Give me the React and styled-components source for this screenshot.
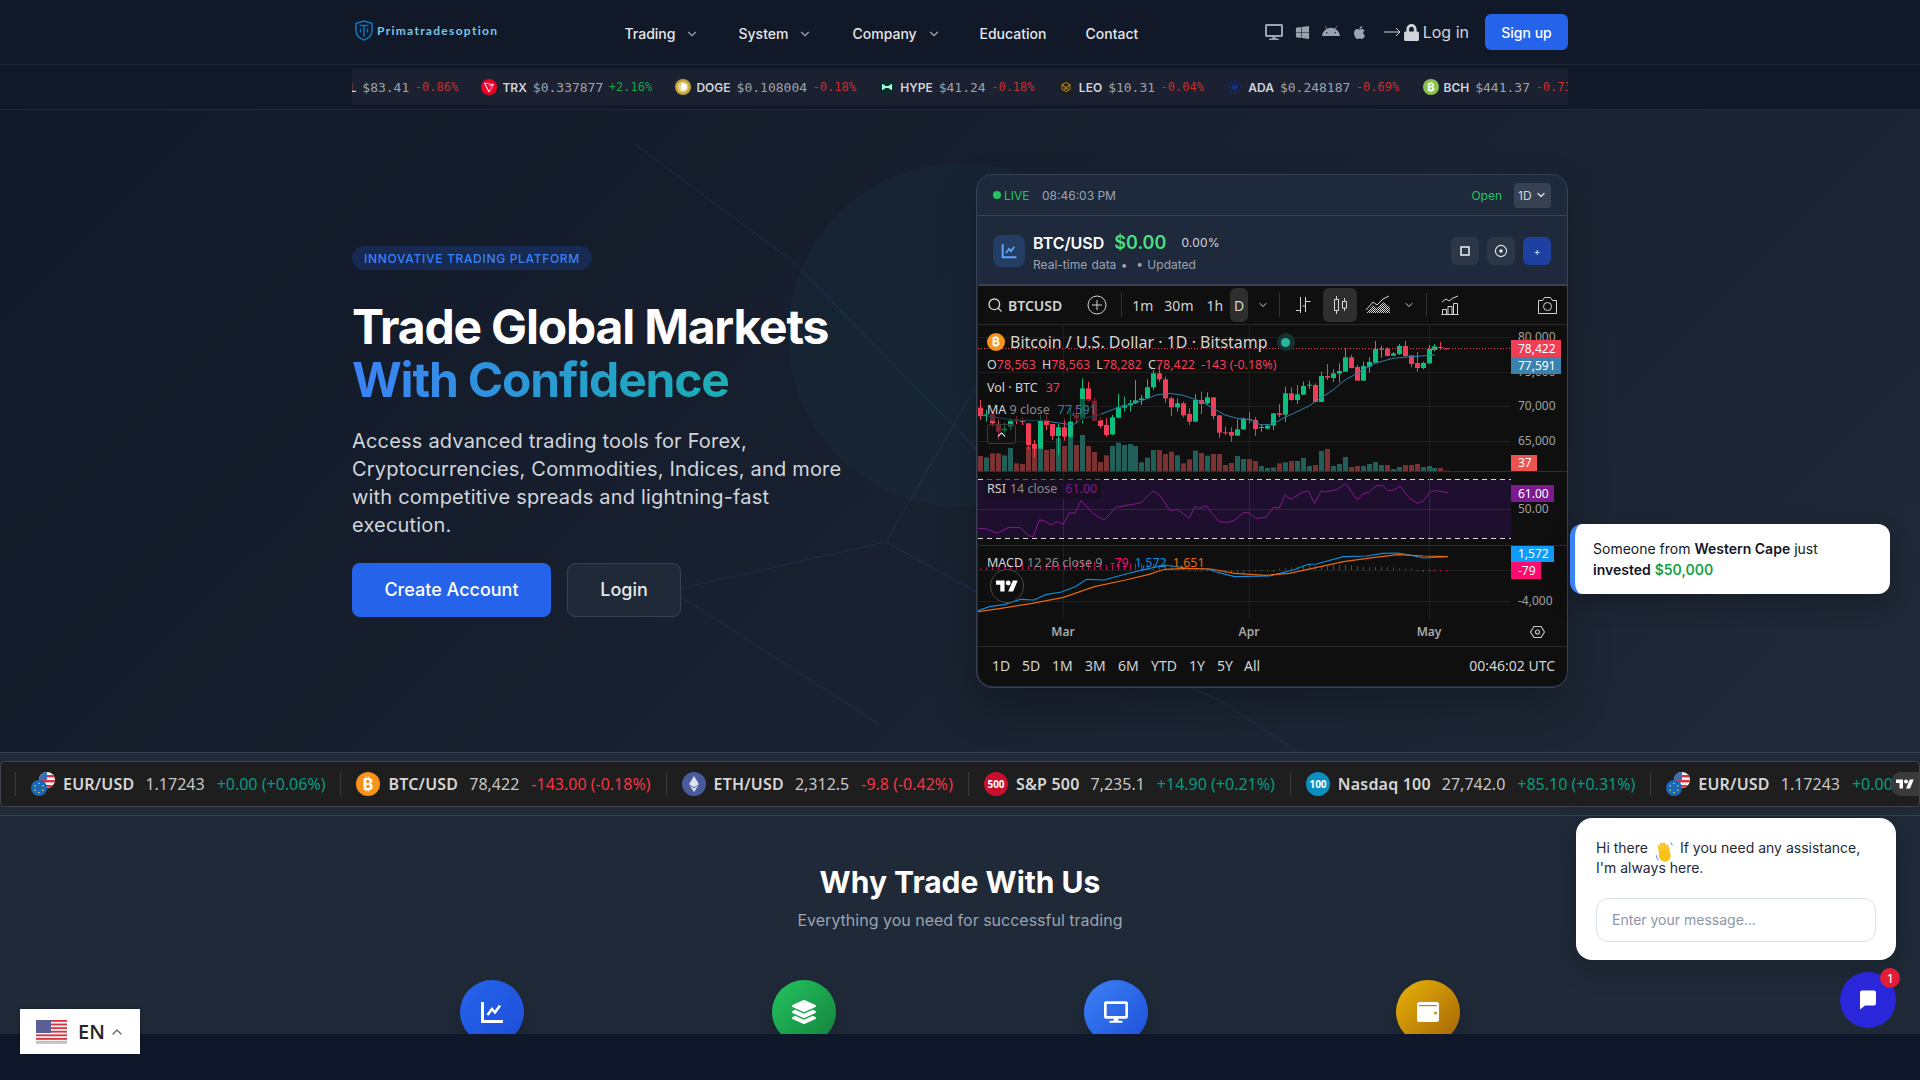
import styled, { createGlobalStyle } from "styled-components";
import {
  FaAndroid,
  FaApple,
  FaDesktop,
  FaLayerGroup,
  FaLock,
  FaWindows,
} from "react-icons/fa";
import { ChevronDown, ChevronUp, Search } from "lucide-react";

const GlobalStyle = createGlobalStyle`
  html, body {
    margin: 0;
    height: 100%;
    background: #111827;
    font-family: Inter, "Liberation Sans", sans-serif;
  }
  * { box-sizing: border-box; }
`;

const Page = styled.div`
  position: relative;
  height: 100vh;
  display: flex;
  flex-direction: column;
  overflow: hidden;
`;

/* nav */
const Nav = styled.header`
  height: 65px;
  flex: none;
  background: #111827;
  border-bottom: 1px solid #1f2937;
  padding: 0 352px;
  display: flex;
  align-items: center;
`;
const Logo = styled.div`
  display: flex;
  align-items: center;
  gap: 4px;
  width: 269.5px;
  margin-top: -4px;
  margin-left: 3px;
  color: #7cc4e8;
  font: 700 12px Lato, Inter, sans-serif;
  letter-spacing: 1.3px;
`;
const NavLinks = styled.nav`
  display: flex;
  align-items: center;
  margin-top: 3px;
`;
const NavLink = styled.a`
  display: flex;
  align-items: center;
  gap: 10px;
  width: ${(p) => p.$w}px;
  color: #e5e7eb;
  font-size: 14px;
  font-weight: 500;
`;
const NavRight = styled.div`
  margin-left: auto;
  display: flex;
  align-items: center;
  color: #9ca3af;
`;
const Platforms = styled.div`
  display: flex;
  align-items: center;
  gap: 12px;
  margin-right: 17px;
  font-size: 16px;
`;
const LogIn = styled.a`
  display: flex;
  align-items: center;
  gap: 2.5px;
  color: #d1d5db;
  font-size: 16px;
  margin-right: 16px;
`;
const SignUp = styled.button`
  width: 83px;
  height: 36px;
  border: 0;
  padding-bottom: 1px;
  border-radius: 6px;
  background: #2563eb;
  color: #fff;
  font: 500 14px Inter, sans-serif;
`;

/* coin strip */
const CoinStrip = styled.div`
  height: 45px;
  flex: none;
  padding: 4px 352px 0;
  background: #111827;
  border-bottom: 1px solid #1f2937;
`;
const CoinViewport = styled.div`
  height: 36px;
  background: #1b2130;
  overflow: hidden;
`;
const CoinTrack = styled.div`
  height: 100%;
  display: flex;
  align-items: center;
  gap: 23.3px;
  margin-left: -40.5px;
  white-space: nowrap;
`;
const Coin = styled.div`
  display: flex;
  align-items: center;
  flex: none;
`;
const CoinSym = styled.span`
  margin-left: 5px;
  color: #d1d5db;
  font-size: 12px;
  font-weight: 600;
`;
const CoinPrice = styled.span`
  margin-left: 6px;
  color: #9ca3af;
  font: 13px "DejaVu Sans Mono", monospace;
`;
const CoinChange = styled.span`
  margin-left: 5.5px;
  color: ${(p) => (p.$up ? "#16a34a" : "#c53030")};
  font: 12px "DejaVu Sans Mono", monospace;
`;

/* hero */
const Hero = styled.section`
  position: relative;
  flex: none;
  height: 642px;
  padding: 64px 352px;
  background: linear-gradient(135deg, #111827 0%, #1f2937 100%);
  overflow: hidden;
`;
const HeroDecor = styled.svg`
  position: absolute;
  top: -110px;
  left: 0;
  width: 1920px;
  height: 1080px;
`;
const HeroGrid = styled.div`
  position: relative;
  display: grid;
  grid-template-columns: 1fr 592px;
  gap: 32px;
  align-items: center;
`;
const HeroCopy = styled.div`
  display: flex;
  flex-direction: column;
  align-items: flex-start;
  padding-top: 1px;
`;
const Badge = styled.span`
  height: 24px;
  width: 240px;
  display: flex;
  align-items: center;
  justify-content: center;
  border-radius: 12px;
  background: rgba(37, 99, 235, 0.2);
  color: #3b82f6;
  font-size: 12px;
  font-weight: 500;
  letter-spacing: 0.68px;
`;
const Title = styled.h1`
  margin: 31px 0 20px;
  color: #fff;
  font-size: 48px;
  line-height: 52.8px;
  font-weight: 700;
  letter-spacing: -1.2px;
`;
const Gradient = styled.span`
  display: inline-block;
  background: linear-gradient(90deg, #3b82f6, #14b8a6);
  background-size: 118% 100%;
  -webkit-background-clip: text;
  background-clip: text;
  color: transparent;
`;
const Lead = styled.p`
  margin: 0 0 24px;
  max-width: 512px;
  color: #d1d5db;
  font-size: 20px;
  line-height: 28px;
  letter-spacing: 0.19px;
`;
const Actions = styled.div`
  display: flex;
  gap: 16px;
`;
const HeroButton = styled.a`
  height: 54px;
  width: ${(p) => p.$w}px;
  display: flex;
  align-items: center;
  justify-content: center;
  border-radius: 8px;
  font-size: 18px;
  font-weight: 500;
  color: ${(p) => (p.$primary ? "#fff" : "#e5e7eb")};
  background: ${(p) => (p.$primary ? "#2563eb" : "#1f2937")};
  border: ${(p) => (p.$primary ? "0" : "1px solid #374151")};
`;

/* chart card */
const Card = styled.div`
  height: 514px;
  display: flex;
  flex-direction: column;
  background: #1e293b;
  border: 1px solid #374151;
  border-radius: 16px;
  box-shadow: 0 20px 40px rgba(0, 0, 0, 0.25);
  overflow: hidden;
`;
const CardBar = styled.div`
  height: 41px;
  flex: none;
  display: flex;
  align-items: center;
  padding: 0 16px;
  border-bottom: 1px solid #374151;
  font-size: 12px;
`;
const LiveDot = styled.i`
  width: 8px;
  height: 8px;
  border-radius: 50%;
  background: #22c55e;
  margin-right: 3px;
`;
const Live = styled.span`
  color: #22c55e;
  width: 28px;
`;
const Clock = styled.span`
  margin-left: 10px;
  color: #9ca3af;
`;
const OpenTag = styled.span`
  margin-left: auto;
  color: #22c55e;
  margin-right: 12px;
`;
const RangeSelect = styled.div`
  width: 37px;
  height: 25px;
  display: flex;
  align-items: center;
  padding-left: 4px;
  gap: 3px;
  border-radius: 4px;
  background: #374151;
  color: #d1d5db;
`;
const SymbolRow = styled.div`
  height: 68px;
  flex: none;
  display: flex;
  align-items: center;
  gap: 8px;
  padding: 2px 16px 0;
`;
const SymbolIcon = styled.div`
  width: 32px;
  height: 32px;
  display: flex;
  align-items: center;
  justify-content: center;
  border-radius: 8px;
  background: rgba(59, 130, 246, 0.22);
`;
const SymbolText = styled.div`
  display: flex;
  flex-direction: column;
  gap: 4px;
  margin-top: 2px;
`;
const SymbolTop = styled.div`
  display: flex;
  align-items: center;
  color: #fff;
  font-size: 16px;
  font-weight: 600;
`;
const SymbolPrice = styled.span`
  margin-left: 10px;
  color: #4ade80;
  font-size: 18px;
  font-weight: 600;
`;
const SymbolPct = styled.span`
  margin-left: 15px;
  color: #d1d5db;
  font-size: 12px;
  font-weight: 400;
  letter-spacing: 0.2px;
`;
const SymbolSub = styled.div`
  color: #9ca3af;
  font-size: 12px;
  word-spacing: 1px;
`;
const SymbolActions = styled.div`
  margin-left: auto;
  display: flex;
  gap: 8px;
`;
const SquareButton = styled.div`
  width: 28px;
  height: 28px;
  display: flex;
  align-items: center;
  justify-content: center;
  border-radius: 6px;
  color: #e5e7eb;
  font-size: 10px;
  background: ${(p) => (p.$primary ? "#1e40a0" : "#2b3647")};
`;

/* tradingview widget */
const Widget = styled.div`
  flex: 1;
  margin: 0 0 1px 1px;
  background: #0f0f0f;
  border-top: 2px solid #374151;
  border-radius: 0 0 15px 15px;
  color: #d4d4d4;
  font-family: "Noto Sans", sans-serif;
  overflow: hidden;
`;
const Toolbar = styled.div`
  height: 39px;
  display: flex;
  align-items: center;
  border-bottom: 1px solid #2a2a2a;
  font-size: 14px;
`;
const Tool = styled.span`
  flex: none;
  display: flex;
  align-items: center;
  justify-content: center;
  margin-left: ${(p) => p.$ml || 0}px;
  ${(p) => p.$w && `width: ${p.$w}px;`}
  ${(p) => p.$semi && "font-weight: 600;"}
`;
const ToolBox = styled(Tool)`
  height: 34px;
  border-radius: 6px;
  background: #2e2e2e;
`;
const ToolSep = styled.i`
  flex: none;
  width: 1px;
  height: 24px;
  background: #333;
  margin-left: ${(p) => p.$ml}px;
`;
const ChartArea = styled.div`
  position: relative;
  height: 321px;
`;
const ChartSvg = styled.svg`
  display: block;
  text {
    font-family: "Noto Sans", sans-serif;
    font-size: 12px;
  }
`;
const Legend = styled.div`
  position: absolute;
  top: 6px;
  left: 9px;
  display: flex;
  flex-direction: column;
  align-items: flex-start;
  font-size: 12.5px;
`;
const LegendRow = styled.div`
  height: 22.5px;
  display: flex;
  align-items: center;
  gap: ${(p) => p.$gap || 0}px;
  padding-right: ${(p) => (p.$dim ? 4 : 0)}px;
  background: ${(p) => (p.$dim ? "rgba(15,15,15,0.55)" : "transparent")};
`;
const LegendTitle = styled.span`
  font-size: 16px;
  margin-left: 5px;
`;
const StatusDot = styled.i`
  width: 18px;
  height: 18px;
  margin-left: 9px;
  border-radius: 50%;
  background: #123330;
  display: flex;
  align-items: center;
  justify-content: center;
  &::after {
    content: "";
    width: 9px;
    height: 9px;
    border-radius: 50%;
    background: #2bb5a0;
  }
`;
const Val = styled.span`
  color: ${(p) => p.$c};
  margin-left: ${(p) => p.$ml || 0}px;
`;
const Muted = styled.span`
  color: #8a8a8a;
`;
const CollapseBtn = styled.div`
  width: 29px;
  height: 20px;
  margin-top: 3px;
  display: flex;
  align-items: center;
  justify-content: center;
  border: 1px solid #3c3c3c;
  border-radius: 3px;
  background: rgba(15, 15, 15, 0.5);
`;
const PaneLegend = styled.div`
  position: absolute;
  left: ${(p) => p.$left}px;
  top: ${(p) => p.$top}px;
  height: 20px;
  display: flex;
  align-items: center;
  gap: 4px;
  padding: 0 4px;
  font-size: 12.5px;
  background: ${(p) => p.$bg || "transparent"};
`;
const TvBadge = styled.div`
  position: absolute;
  left: 12px;
  top: 244px;
  width: 34px;
  height: 34px;
  display: flex;
  align-items: center;
  justify-content: center;
  border-radius: 50%;
  border: 1.5px solid #4a4a4a;
  background: #0f0f0f;
`;
const RangeBar = styled.div`
  height: 38px;
  display: flex;
  align-items: center;
  padding: 0 12px 0 14px;
  border-top: 1px solid #2a2a2a;
  font-size: 14px;
`;
const RangeItem = styled.span`
  width: ${(p) => p.$w}px;
`;
const UtcClock = styled.span`
  margin-left: auto;
`;

/* overlay toast */
const Toast = styled.div`
  position: absolute;
  top: 524px;
  left: 1570px;
  width: 320px;
  height: 70px;
  display: flex;
  align-items: center;
  padding: 0 20px 0 18px;
  background: #fff;
  border-left: 5px solid #3b82f6;
  border-radius: 12px;
  color: #111827;
  font-size: 14px;
  line-height: 21px;
  box-shadow: 0 10px 25px rgba(0, 0, 0, 0.2);
  b { font-weight: 600; }
`;
const Money = styled.b`
  color: #16a34a;
`;

/* tv ticker tape */
const TapeSection = styled.div`
  height: 64px;
  flex: none;
  padding: 8px 0;
  background: #1f2937;
  border-top: 1px solid #374151;
  border-bottom: 1px solid #374151;
`;
const Tape = styled.div`
  position: relative;
  height: 46px;
  display: flex;
  align-items: center;
  padding-left: 14px;
  background: #1e1e1e;
  border: 1px solid #3f444c;
  border-radius: 4px;
  overflow: hidden;
  white-space: nowrap;
  font: 16px "Noto Sans", sans-serif;
`;
const TapeItem = styled.div`
  flex: none;
  display: flex;
  align-items: center;
  height: 24px;
  padding: 0 15px;
  border-left: 1px solid #3a3a3a;
`;
const TapeSym = styled.span`
  margin: 0 11px 0 8px;
  color: #d6d6d6;
  font-weight: 600;
  letter-spacing: 0.2px;
`;
const TapePrice = styled.span`
  margin-right: 12px;
  color: #c6c6c6;
`;
const TapeChange = styled.span`
  color: ${(p) => (p.$up ? "#089981" : "#f23645")};
`;
const TapeLogo = styled.div`
  position: absolute;
  right: 0;
  top: 10px;
  width: 28px;
  height: 24px;
  display: flex;
  align-items: center;
  justify-content: center;
  border-radius: 10px 0 0 10px;
  background: #3a3a3a;
`;

/* why section */
const Why = styled.section`
  flex: 1;
  min-height: 0;
  overflow: hidden;
  padding: 48px 352px 0;
  background: #1f2937;
  text-align: center;
`;
const WhyTitle = styled.h2`
  margin: 0;
  color: #fff;
  font-size: 30px;
  line-height: 36px;
  font-weight: 700;
`;
const WhySub = styled.p`
  margin: 8px 0 48px;
  color: #9ca3af;
  font-size: 16px;
  line-height: 24px;
`;
const Features = styled.div`
  display: grid;
  grid-template-columns: repeat(4, 1fr);
  gap: 32px;
`;
const FeatureIcon = styled.div`
  width: 64px;
  height: 64px;
  margin: 0 auto;
  display: flex;
  align-items: center;
  justify-content: center;
  border-radius: 50%;
  color: #fff;
  font-size: 24px;
  background: linear-gradient(135deg, ${(p) => p.$from}, ${(p) => p.$to});
  box-shadow: 0 10px 15px rgba(0, 0, 0, 0.15);
`;
const Band = styled.div`
  height: 46px;
  flex: none;
  background: #0f172a;
`;

/* floating widgets */
const LangBox = styled.div`
  position: absolute;
  left: 20px;
  top: 1009px;
  width: 120px;
  height: 45px;
  display: flex;
  align-items: center;
  padding-left: 16px;
  background: #fff;
  box-shadow: 0 0 4px rgba(0, 0, 0, 0.2);
  color: #262626;
  font: 600 20px "Open Sans", sans-serif;
`;
const LangCode = styled.span`
  margin: 0 4px 0 11px;
`;
const ChatCard = styled.div`
  position: absolute;
  left: 1576px;
  top: 818px;
  width: 320px;
  height: 142px;
  padding: 21px 20px;
  background: #fff;
  border-radius: 16px;
  box-shadow: 0 8px 30px rgba(0, 0, 0, 0.15);
  color: #1f2937;
  font-size: 14px;
  line-height: 18px;
`;
const ChatText = styled.div`
  white-space: nowrap;
`;
const ChatInput = styled.div`
  margin-top: 21px;
  width: 280px;
  height: 44px;
  display: flex;
  align-items: center;
  padding-left: 15px;
  border: 1.5px solid #dbe2ea;
  border-radius: 12px;
  color: #8c96a8;
`;
const ChatBubble = styled.div`
  position: absolute;
  left: 1840px;
  top: 972px;
  width: 56px;
  height: 56px;
  display: flex;
  align-items: center;
  justify-content: center;
  border-radius: 50%;
  background: #2a26d9;
`;
const ChatCount = styled.span`
  position: absolute;
  top: -4px;
  right: -4px;
  width: 20px;
  height: 20px;
  display: flex;
  align-items: center;
  justify-content: center;
  border-radius: 50%;
  background: #e11d38;
  color: #fff;
  font-size: 12px;
`;

/* chart data, read off the picture */
const candles = [
  ["r",210,233,258,270],["g",240,253,257,275],["r",240,252,280,290],["r",265,283,305,330],["g",280,295,302,310],
  ["g",265,272,290,300],["r",258,268,272,282],["r",262,270,276,285],["r",280,280,345,358],["r",330,342,356,383],
  ["g",255,272,356,356],["r",250,270,285,300],["r",282,282,318,330],["g",282,292,318,375],["r",265,292,320,332],
  ["g",235,275,320,325],["r",225,255,265,280],["g",145,175,265,280],["r",155,175,212,215],["r",205,212,272,272],
  ["r",262,270,288,295],["r",265,285,315,320],["g",255,262,313,315],["g",192,232,263,265],["g",200,226,233,245],
  ["g",210,220,226,245],["g",150,211,220,222],["g",195,205,210,225],["g",148,172,205,207],["g",120,130,172,180],
  ["r",105,130,148,155],["r",140,148,205,218],["r",200,205,232,258],["g",205,220,232,245],["r",215,220,256,262],
  ["r",235,252,275,285],["g",192,210,275,275],["r",185,210,222,252],["g",187,202,220,224],["r",202,202,258,268],
  ["r",256,256,308,323],["r",290,307,309,315],["r",292,306,317,335],["g",268,298,317,318],["g",262,267,298,300],
  ["r",245,267,270,280],["r",262,270,297,318],["g",282,291,294,305],["g",283,287,296,298],["g",250,250,287,300],
  ["r",222,250,255,262],["g",170,190,254,276],["r",172,190,210,212],["g",165,193,210,222],["g",155,168,194,195],
  ["g",152,164,166,177],["r",160,165,216,217],["g",125,138,216,216],["r",102,138,143,150],["g",118,130,144,156],
  ["g",100,123,131,158],["g",55,82,125,126],["r",75,82,114,115],["r",105,111,152,152],["g",95,108,152,152],
  ["g",82,96,110,128],["g",33,57,98,98],["g",47,56,59,83],["r",52,56,78,78],["g",66,70,77,78],
  ["g",42,48,72,75],["r",33,48,78,80],["r",76,76,102,112],["r",66,99,114,125],["g",95,99,114,118],
  ["g",45,57,100,102],["g",42,49,60,63],["r",36,51,53,60],["r",55,55,56,58],
];
const volumes = [
  378,382,370,370,376,354,400,402,350,347,355,360,357,325,348,315,345,315,348,366,396,376,348,338,345,342,348,397,383,360,
  360,372,365,376,400,388,362,369,377,372,372,405,399,378,387,387,393,408,414,412,400,397,393,393,384,408,405,363,357,408,
  402,381,411,408,408,402,396,405,405,417,411,405,405,402,411,408,414,414,422,
];
const maLine = [
  [2,255],[18,262],[35,270],[65,272],[95,285],[104,265],[118,258],[138,235],[161,215],[178,195],[191,190],[204,195],[224,215],
  [235,235],[247,255],[259,265],[271,268],[283,285],[295,282],[307,262],[319,245],[331,228],[337,215],[355,180],[367,150],[385,120],[397,100],[415,85],[433,80],[457,75],
];
const rsiZ = [
  [20,175],[40,176],[70,190],[100,172],[130,173],[150,197],[162,200],[178,150],[190,152],[208,165],[225,155],[240,163],[255,128],[270,130],[285,92],
  [318,132],[345,150],[375,112],[410,105],[440,98],[470,63],[485,72],[515,122],[532,118],[563,145],[578,110],[590,115],[607,107],[640,155],[665,157],
  [680,150],[703,128],[718,128],[735,146],[760,142],[780,112],[795,114],[810,75],[825,88],[855,66],[870,64],[886,100],[902,63],[915,66],[945,58],
  [965,40],[995,90],[1010,72],[1025,67],[1045,47],[1060,47],[1075,62],[1090,60],[1105,48],[1130,85],[1150,100],[1165,92],[1182,66],[1197,62],[1228,68],
];
const macdZ = [
  [20,422],[50,410],[90,403],[130,388],[165,390],[195,374],[235,366],[270,350],[300,328],[345,330],[400,312],[450,298],[500,285],[560,295],[610,297],
  [640,308],[680,320],[770,318],[830,300],[870,283],[890,282],[960,260],[1020,258],[1060,250],[1100,249],[1130,255],[1165,264],[1228,260],
];
const signalZ = [
  [20,425],[80,415],[160,400],[240,382],[320,350],[400,330],[460,313],[500,298],[560,295],[620,297],[680,310],[760,316],[820,310],[880,295],[960,275],
  [1040,262],[1100,254],[1165,258],[1228,260],
];

const paneX = (z) => z / 2.57 - 8;
const paneY = (z) => 145 + z / 3;
const toPoints = (list) => list.map(([x, y]) => `${paneX(x).toFixed(1)},${paneY(y).toFixed(1)}`).join(" ");
const candleX = (i) => Math.round(2 + 5.98 * i);
const zy = (z) => 5 + z / 3;

function lerp(list, x) {
  for (let i = 1; i < list.length; i++) {
    if (x <= list[i][0]) {
      const [x0, y0] = list[i - 1];
      const [x1, y1] = list[i];
      return y0 + ((y1 - y0) * (x - x0)) / (x1 - x0);
    }
  }
  return list[list.length - 1][1];
}

const priceTicks = [
  ["80,000", 12],
  ["75,000", 47],
  ["70,000", 81],
  ["65,000", 116],
];

function PriceTag({ y, h = 17, w, fill, children }) {
  return (
    <g>
      <rect x="533" y={y} width={w} height={h} fill={fill} />
      <text x="540" y={y + h / 2 + 4} fill="#fff">
        {children}
      </text>
    </g>
  );
}

function Chart() {
  return (
    <ChartSvg width="589" height="321" viewBox="0 0 589 321">
      {[85, 271, 451].map((x) => (
        <line key={x} x1={x + 0.5} x2={x + 0.5} y1="0" y2="293" stroke="#1f1f1f" />
      ))}
      {[12, 47, 81, 116].map((y) => (
        <line key={y} x1="0" x2="533" y1={y + 0.5} y2={y + 0.5} stroke="#1f1f1f" />
      ))}

      {volumes.map((top, i) => (
        <rect
          key={i}
          x={candleX(i) - 2}
          y={zy(top)}
          width="5"
          height={(424 - top) / 3}
          fill={candles[i][0] === "g" ? "#225f58" : "#7a3232"}
        />
      ))}
      {candles.map(([c, wt, t, b, wb], i) => {
        const fill = c === "g" ? "#0abf7d" : "#f23d56";
        return (
          <g key={i} fill={fill}>
            <rect x={candleX(i)} y={zy(wt)} width="1" height={(wb - wt) / 3} />
            <rect x={candleX(i) - 2} y={zy(t)} width="5" height={Math.max(1, (b - t) / 3)} />
          </g>
        );
      })}
      <polyline
        points={maLine.map(([x, y]) => `${x},${zy(y).toFixed(1)}`).join(" ")}
        fill="none"
        stroke="#2f7fa8"
        strokeWidth="1"
      />
      <line x1="0" x2="533" y1="23.5" y2="23.5" stroke="#f23d56" strokeDasharray="1 2" />

      {priceTicks.map(([label, y]) => (
        <text key={label} x="540" y={y + 4} fill="#a0a0a0">
          {label}
        </text>
      ))}
      <PriceTag y={15} w={50} fill="#f23d56">78,422</PriceTag>
      <PriceTag y={32} w={50} fill="#3b83ae">77,591</PriceTag>
      <PriceTag y={130} h={16} w={26} fill="#ef5350">37</PriceTag>

      <line x1="0" x2="589" y1="146.5" y2="146.5" stroke="#2e2e2e" />
      <rect x="0" y="154" width="533" height="59" fill="#1e0f2e" />
      <line x1="0" x2="533" y1="154.5" y2="154.5" stroke="#d8d8d8" strokeDasharray="5 4" />
      <line x1="0" x2="533" y1="213.5" y2="213.5" stroke="#d8d8d8" strokeDasharray="5 4" />
      <line x1="0" x2="533" y1="184.5" y2="184.5" stroke="#33243f" />
      <line x1="85.5" x2="85.5" y1="154" y2="213" stroke="#33243f" />
      <line x1="271.5" x2="271.5" y1="154" y2="213" stroke="#33243f" />
      <line x1="451.5" x2="451.5" y1="154" y2="213" stroke="#33243f" />
      <polyline points={toPoints(rsiZ)} fill="none" stroke="#85198f" strokeWidth="1" />
      <PriceTag y={160} w={43} fill="#7e1a90">61.00</PriceTag>
      <text x="540" y="188" fill="#a0a0a0">50.00</text>

      <line x1="0" x2="589" y1="220.5" y2="220.5" stroke="#2e2e2e" />
      <line x1="0" x2="533" y1="245.5" y2="245.5" stroke="#1f1f1f" />
      <line x1="0" x2="533" y1="276.5" y2="276.5" stroke="#1f1f1f" />
      <g opacity="0.75">
        {candles.map((_, i) => {
          const z = (candleX(i) + 8) * 2.57;
          const d = (lerp(signalZ, z) - lerp(macdZ, z)) / 3;
          const h = Math.max(1.5, Math.abs(d) * 1.1);
          return (
            <rect
              key={i}
              x={candleX(i)}
              y={d >= 0 ? 245 - h : 245}
              width="1"
              height={h}
              fill="#ff0a6e"
            />
          );
        })}
      </g>
      <polyline points={toPoints(macdZ)} fill="none" stroke="#0f8de0" strokeWidth="1.2" />
      <polyline points={toPoints(signalZ)} fill="none" stroke="#e8690c" strokeWidth="1.2" />
      <PriceTag y={221} h={16} w={43} fill="#0f9bfa">1,572</PriceTag>
      <PriceTag y={237} w={30} fill="#ff0a6e">-79</PriceTag>
      <text x="540" y="280" fill="#a0a0a0">-4,000</text>

      <g fontWeight="600" fill="#a8a8a8" textAnchor="middle">
        <text x="85" y="311">Mar</text>
        <text x="271" y="311">Apr</text>
        <text x="451" y="311">May</text>
      </g>
      <g fill="none" stroke="#c8c8c8" strokeWidth="1.1">
        <path d="M556 301.5h7l3.5 5.5-3.5 5.5h-7l-3.5-5.5z" />
        <circle cx="559.5" cy="307" r="2" />
      </g>
    </ChartSvg>
  );
}

function TvMark({ w = 22, h = 14 }) {
  return (
    <svg width={w} height={h} viewBox="0 4 36 18" fill="#fff">
      <path d="M14 22H7V11H0V4h14v18zM28 22h-8l7.5-18h8L28 22z" />
      <circle cx="20" cy="8" r="4" />
    </svg>
  );
}

function ChartGlyph({ size = 24, color = "#fff" }) {
  return (
    <svg width={size} height={size} viewBox="0 0 24 24" fill="none" stroke={color} strokeWidth="3">
      <path d="M2.5 2v19.5H23" />
      <path d="M7.5 15l4.5-6 3 3.5 5-7" strokeWidth="2.6" />
    </svg>
  );
}

function WalletGlyph() {
  return (
    <svg width="24" height="24" viewBox="0 0 24 24">
      <rect x="1" y="2" width="22" height="20" rx="2.5" fill="#fff" />
      <rect x="3" y="5" width="18" height="1.2" fill="#b98508" />
      <circle cx="19.5" cy="13" r="1.5" fill="#c98f08" />
    </svg>
  );
}

function BtcLogo({ size = 18 }) {
  return (
    <svg width={size} height={size} viewBox="0 0 18 18">
      <circle cx="9" cy="9" r="9" fill="#f7931a" />
      <text x="9" y="13.2" fontSize="12" fontWeight="700" fill="#fff" textAnchor="middle" fontFamily="Inter">₿</text>
    </svg>
  );
}

function CoinLogo({ kind }) {
  return (
    <svg width="16" height="16" viewBox="0 0 16 16" style={{ flex: "none" }}>
      {kind === "sol" && <circle cx="8" cy="8" r="8" fill="#111" />}
      {kind === "trx" && (
        <>
          <circle cx="8" cy="8" r="8" fill="#ef0027" />
          <path d="M3.5 4l9 1.6-4.4 7.4zM3.5 4l4.6 9M8 7.2l4.5-1.6" fill="none" stroke="#fff" strokeWidth=".8" />
        </>
      )}
      {kind === "doge" && (
        <>
          <circle cx="8" cy="8" r="8" fill="#c2a633" />
          <circle cx="8" cy="8" r="5.5" fill="#e1cf8e" />
          <path d="M6 4.6h2.4a3.4 3.4 0 010 6.8H6z" fill="#fff" />
        </>
      )}
      {kind === "hype" && (
        <>
          <circle cx="8" cy="8" r="8" fill="#0a2b2a" />
          <path d="M3 5c2 0 2 2 5 2s3-2 5-2v6c-2 0-2-2-5-2s-3 2-5 2z" fill="#97fce4" />
        </>
      )}
      {kind === "leo" && (
        <>
          <circle cx="8" cy="8" r="8" fill="#1d1f22" />
          <path d="M4 5.5l4-2 4 2v5l-4 2-4-2zM4 5.5l6 5M12 5.5l-6 5" fill="none" stroke="#a77f1e" strokeWidth="1.1" />
        </>
      )}
      {kind === "ada" && (
        <g fill="#0d2f8f">
          <circle cx="8" cy="8" r="3" />
          {[0, 45, 90, 135, 180, 225, 270, 315].map((a) => (
            <circle key={a} cx="8" cy="2" r=".9" transform={`rotate(${a} 8 8)`} />
          ))}
        </g>
      )}
      {kind === "bch" && (
        <>
          <circle cx="8" cy="8" r="8" fill="#8dc351" />
          <text x="8" y="11.8" fontSize="11" fontWeight="700" fill="#fff" textAnchor="middle" fontFamily="Inter">₿</text>
        </>
      )}
    </svg>
  );
}

function PairLogo({ kind }) {
  if (kind === "eur") {
    return (
      <svg width="24" height="24" viewBox="0 0 24 24">
        <clipPath id="usCircle"><circle cx="16" cy="8" r="8" /></clipPath>
        <g clipPath="url(#usCircle)">
          <rect x="8" y="0" width="16" height="16" fill="#f2f2f2" />
          <rect x="8" y="3" width="16" height="2.4" fill="#d8313f" />
          <rect x="8" y="8" width="16" height="2.4" fill="#d8313f" />
          <rect x="8" y="13" width="16" height="2.4" fill="#d8313f" />
          <rect x="8" y="0" width="8" height="8" fill="#3a6fb5" />
        </g>
        <circle cx="8" cy="16" r="8" fill="#1668b8" />
        {[0, 60, 120, 180, 240, 300].map((a) => (
          <circle key={a} cx="8" cy="11.5" r=".8" fill="#f5cf3c" transform={`rotate(${a} 8 16)`} />
        ))}
      </svg>
    );
  }
  if (kind === "btc") return <BtcLogo size={24} />;
  if (kind === "eth") {
    return (
      <svg width="24" height="24" viewBox="0 0 24 24">
        <circle cx="12" cy="12" r="12" fill="#4a5b9c" />
        <path d="M12 4l5 8.2-5 3-5-3zM7.6 13.6L12 16.2l4.4-2.6L12 20z" fill="#dfe4f5" />
      </svg>
    );
  }
  const fill = kind === "500" ? "#c8102e" : "#0b8fc0";
  return (
    <svg width="24" height="24" viewBox="0 0 24 24">
      <circle cx="12" cy="12" r="12" fill={fill} />
      <text x="12" y="15.6" fontSize="10" fontWeight="700" fill="#fff" textAnchor="middle" fontFamily="Noto Sans">{kind}</text>
    </svg>
  );
}

function ShieldLogo() {
  return (
    <svg width="18" height="21" viewBox="0 0 18 21" fill="none" stroke="#0f72b8" strokeWidth="1.6">
      <path d="M9 1l8 2.4v7c0 4.6-3.4 7.8-8 9.6-4.6-1.8-8-5-8-9.6v-7z" />
      <path d="M4.5 5.5h9M9 5.5v11M5.5 8.5v4M12.5 8.5v4" />
    </svg>
  );
}

function SignInArrow() {
  return (
    <svg width="17" height="10" viewBox="0 0 17 10" fill="none" stroke="#d1d5db" strokeWidth="1">
      <path d="M0 5h16M12 1l4 4-4 4" />
    </svg>
  );
}

function OhlcIcon() {
  return (
    <svg width="16" height="20" viewBox="0 0 16 20" fill="none" stroke="#d4d4d4">
      <path d="M5.5 2v16M1 15.5h4.5M10.5 2v15M10.5 6.5h5M10.5 11h-3" />
    </svg>
  );
}

function CandleIcon() {
  return (
    <svg width="15" height="20" viewBox="0 0 15 20" fill="none" stroke="#d4d4d4">
      <path d="M3.5 1v3M3.5 16v3M11.5 3v3M11.5 13v3" />
      <rect x="1.5" y="4.5" width="4" height="11" />
      <rect x="9.5" y="6.5" width="4" height="6.5" />
    </svg>
  );
}

function AreaIcon() {
  return (
    <svg width="24" height="20" viewBox="0 0 24 20">
      <defs>
        <pattern id="hatch" width="2" height="2" patternUnits="userSpaceOnUse">
          <rect width="1" height="1" fill="#d4d4d4" />
          <rect x="1" y="1" width="1" height="1" fill="#d4d4d4" />
        </pattern>
      </defs>
      <path d="M0 18l7-8 4 3 6-6 7 5v6H0z" fill="url(#hatch)" />
      <path d="M0 15l7-8 4 3 6-6 6-3" fill="none" stroke="#d4d4d4" />
    </svg>
  );
}

function IndicatorIcon() {
  return (
    <svg width="18" height="20" viewBox="0 0 18 20" fill="none" stroke="#d4d4d4">
      <path d="M1 7l4-3 3 2 4-3 5-2M.5 19.5h17M1.5 14.5h4v5h-4zM7 11.5h4v8H7zM12.5 8.5h4v11h-4z" />
    </svg>
  );
}

function CameraIcon() {
  return (
    <svg width="21" height="19" viewBox="0 0 21 19" fill="none" stroke="#d4d4d4">
      <path d="M1.5 4.5h4l2-3h6l2 3h4v13h-18z" />
      <circle cx="10.5" cy="10.5" r="4" />
    </svg>
  );
}

function Wave() {
  return (
    <svg width="20" height="22" viewBox="0 0 16 20" style={{ verticalAlign: "-6px", margin: "-6px 6px -4px" }}>
      <g transform="rotate(-12 8 10)">
        <rect x="3.5" y="2.5" width="2.4" height="10" rx="1.2" fill="#fcc21b" />
        <rect x="6" y="1" width="2.4" height="11" rx="1.2" fill="#fcc21b" />
        <rect x="8.5" y="1.5" width="2.4" height="11" rx="1.2" fill="#fcc21b" />
        <rect x="11" y="4" width="2.2" height="9" rx="1.1" fill="#fcc21b" />
        <ellipse cx="8" cy="13" rx="5.4" ry="6" fill="#fcc21b" />
      </g>
      <path d="M1 13c.2 2 1 3.4 2 4.5M14 1.5c.8.6 1.3 1.4 1.5 2.5" stroke="#4aa3df" strokeWidth="1" fill="none" />
    </svg>
  );
}

function UsFlag() {
  const stripes = [0, 1, 2, 3, 4, 5, 6];
  return (
    <svg width="31" height="24" viewBox="0 0 31 24">
      <rect width="31" height="24" fill="#f4f4f4" />
      {stripes.map((s) => (
        <rect key={s} y={s * 3.6} width="31" height="1.8" fill="#d9343f" />
      ))}
      <rect y="22" width="31" height="2" fill="#c9c9c9" />
      <rect width="15" height="13" fill="#5b5f97" />
    </svg>
  );
}

const coins = [
  { kind: "sol", sym: "SOL", price: "$83.41", change: "-0.86%" },
  { kind: "trx", sym: "TRX", price: "$0.337877", change: "+2.16%", up: true },
  { kind: "doge", sym: "DOGE", price: "$0.108004", change: "-0.18%" },
  { kind: "hype", sym: "HYPE", price: "$41.24", change: "-0.18%" },
  { kind: "leo", sym: "LEO", price: "$10.31", change: "-0.04%" },
  { kind: "ada", sym: "ADA", price: "$0.248187", change: "-0.69%" },
  { kind: "bch", sym: "BCH", price: "$441.37", change: "-0.73%" },
];

const pairs = [
  { kind: "eur", sym: "EUR/USD", price: "1.17243", change: "+0.00 (+0.06%)", up: true },
  { kind: "btc", sym: "BTC/USD", price: "78,422", change: "-143.00 (-0.18%)" },
  { kind: "eth", sym: "ETH/USD", price: "2,312.5", change: "-9.8 (-0.42%)" },
  { kind: "500", sym: "S&P 500", price: "7,235.1", change: "+14.90 (+0.21%)", up: true },
  { kind: "100", sym: "Nasdaq 100", price: "27,742.0", change: "+85.10 (+0.31%)", up: true },
  { kind: "eur", sym: "EUR/USD", price: "1.17243", change: "+0.00 (+0.06%)", up: true },
];

const ranges = [
  ["1D", 30],
  ["5D", 30],
  ["1M", 33],
  ["3M", 33],
  ["6M", 33],
  ["YTD", 38],
  ["1Y", 28],
  ["5Y", 27],
  ["All", 30],
];

export default function App() {
  return (
    <Page>
      <GlobalStyle />
      <Nav>
        <Logo>
          <ShieldLogo />
          Primatradesoption
        </Logo>
        <NavLinks>
          <NavLink $w={114}>Trading <ChevronDown size={14} color="#9ca3af" /></NavLink>
          <NavLink $w={114}>System <ChevronDown size={14} color="#9ca3af" /></NavLink>
          <NavLink $w={127}>Company <ChevronDown size={14} color="#9ca3af" /></NavLink>
          <NavLink $w={106}>Education</NavLink>
          <NavLink $w={60}>Contact</NavLink>
        </NavLinks>
        <NavRight>
          <Platforms>
            <FaDesktop size={18} />
            <FaWindows size={15} />
            <FaAndroid size={18} />
            <FaApple size={15} />
          </Platforms>
          <LogIn>
            <SignInArrow />
            <FaLock size={17} />
            Log in
          </LogIn>
          <SignUp>Sign up</SignUp>
        </NavRight>
      </Nav>

      <CoinStrip>
        <CoinViewport>
          <CoinTrack>
            {coins.map((c) => (
              <Coin key={c.sym}>
                <CoinLogo kind={c.kind} />
                <CoinSym>{c.sym}</CoinSym>
                <CoinPrice>{c.price}</CoinPrice>
                <CoinChange $up={c.up}>{c.change}</CoinChange>
              </Coin>
            ))}
          </CoinTrack>
        </CoinViewport>
      </CoinStrip>

      <Hero>
        <HeroDecor viewBox="0 0 1920 1080" fill="none" stroke="#3b82f6" strokeOpacity="0.14">
          <circle cx="960" cy="335" r="172" fill="#14b8a6" fillOpacity="0.04" stroke="none" />
          <path d="M636 145L791 260L976 449M976 386L886 542L682 588M886 542L976 592M681 597L877 723M960 432L976 449M1190 687L1223 702L1297 752M960 580L976 592" />
        </HeroDecor>
        <HeroGrid>
          <HeroCopy>
            <Badge>INNOVATIVE TRADING PLATFORM</Badge>
            <Title>
              Trade Global Markets
              <br />
              <Gradient>With Confidence</Gradient>
            </Title>
            <Lead>
              Access advanced trading tools for Forex, Cryptocurrencies, Commodities, Indices, and more
              with competitive spreads and lightning-fast execution.
            </Lead>
            <Actions>
              <HeroButton $primary $w={199}>Create Account</HeroButton>
              <HeroButton $w={114}>Login</HeroButton>
            </Actions>
          </HeroCopy>

          <Card>
            <CardBar>
              <LiveDot />
              <Live>LIVE</Live>
              <Clock>08:46:03 PM</Clock>
              <OpenTag>Open</OpenTag>
              <RangeSelect>1D <ChevronDown size={12} strokeWidth={3} /></RangeSelect>
            </CardBar>
            <SymbolRow>
              <SymbolIcon><ChartGlyph size={16} color="#60a5fa" /></SymbolIcon>
              <SymbolText>
                <SymbolTop>
                  BTC/USD
                  <SymbolPrice>$0.00</SymbolPrice>
                  <SymbolPct>0.00%</SymbolPct>
                </SymbolTop>
                <SymbolSub>Real-time data • &nbsp;• Updated</SymbolSub>
              </SymbolText>
              <SymbolActions>
                <SquareButton>
                  <svg width="10" height="10" viewBox="0 0 10 10" fill="none" stroke="#e5e7eb" strokeWidth="1.6"><rect x="1" y="1" width="8" height="8" /></svg>
                </SquareButton>
                <SquareButton>
                  <svg width="14" height="14" viewBox="0 0 14 14" fill="none" stroke="#e5e7eb" strokeWidth="1.1"><circle cx="7" cy="7" r="5.6" /><circle cx="7" cy="7" r="1.2" fill="#e5e7eb" /></svg>
                </SquareButton>
                <SquareButton $primary>+</SquareButton>
              </SymbolActions>
            </SymbolRow>

            <Widget>
              <Toolbar>
                <Tool $ml={9}><Search size={16} /></Tool>
                <Tool $ml={5} $semi>BTCUSD</Tool>
                <Tool $ml={25}>
                  <svg width="20" height="20" viewBox="0 0 20 20" fill="none" stroke="#d4d4d4"><circle cx="10" cy="10" r="9" /><path d="M10 5v10M5 10h10" /></svg>
                </Tool>
                <ToolSep $ml={14} />
                <Tool $ml={10}>1m</Tool>
                <Tool $ml={11}>30m</Tool>
                <Tool $ml={13}>1h</Tool>
                <ToolBox $ml={7} $w={18}>D</ToolBox>
                <Tool $ml={9}><ChevronDown size={12} /></Tool>
                <ToolSep $ml={10} />
                <Tool $ml={15}><OhlcIcon /></Tool>
                <ToolBox $ml={12} $w={34}><CandleIcon /></ToolBox>
                <Tool $ml={9}><AreaIcon /></Tool>
                <Tool $ml={13}><ChevronDown size={12} /></Tool>
                <ToolSep $ml={11} />
                <Tool $ml={14}><IndicatorIcon /></Tool>
                <Tool $ml={78}><CameraIcon /></Tool>
              </Toolbar>
              <ChartArea>
                <Chart />
                <Legend>
                  <LegendRow>
                    <BtcLogo />
                    <LegendTitle>Bitcoin / U.S. Dollar · 1D · Bitstamp</LegendTitle>
                    <StatusDot />
                  </LegendRow>
                  <LegendRow>
                    O<Val $c="#f23d56">78,563</Val>
                    <Val $c="#d4d4d4" $ml={6}>H</Val><Val $c="#f23d56">78,563</Val>
                    <Val $c="#d4d4d4" $ml={6}>L</Val><Val $c="#f23d56">78,282</Val>
                    <Val $c="#d4d4d4" $ml={6}>C</Val><Val $c="#f23d56">78,422</Val>
                    <Val $c="#f23d56" $ml={6}>-143 (-0.18%)</Val>
                  </LegendRow>
                  <LegendRow $dim>
                    Vol · BTC<Val $c="#f23d56" $ml={8}>37</Val>
                  </LegendRow>
                  <LegendRow $dim>
                    MA&nbsp;<Muted>9 close</Muted><Val $c="#2f7fa8" $ml={8}>77,591</Val>
                  </LegendRow>
                  <CollapseBtn><ChevronUp size={13} color="#e5e5e5" /></CollapseBtn>
                </Legend>
                <PaneLegend $left={5} $top={153} $bg="rgba(20,14,26,0.6)">
                  RSI <Muted>14 close</Muted><Val $c="#85198f" $ml={4}>61.00</Val>
                </PaneLegend>
                <PaneLegend $left={5} $top={227}>
                  MACD <Muted>12 26 close 9</Muted>
                  <Val $c="#ff0a6e" $ml={4}>-79</Val>
                  <Val $c="#0f8de0" $ml={2}>1,572</Val>
                  <Val $c="#e8690c" $ml={2}>1,651</Val>
                </PaneLegend>
                <TvBadge><TvMark /></TvBadge>
              </ChartArea>
              <RangeBar>
                {ranges.map(([label, w]) => (
                  <RangeItem key={label} $w={w}>{label}</RangeItem>
                ))}
                <UtcClock>00:46:02 UTC</UtcClock>
              </RangeBar>
            </Widget>
          </Card>
        </HeroGrid>
      </Hero>

      <TapeSection>
        <Tape>
          {pairs.map((p, i) => (
            <TapeItem key={i}>
              <PairLogo kind={p.kind} />
              <TapeSym>{p.sym}</TapeSym>
              <TapePrice>{p.price}</TapePrice>
              <TapeChange $up={p.up}>{p.change}</TapeChange>
            </TapeItem>
          ))}
          <TapeLogo><TvMark w={18} h={12} /></TapeLogo>
        </Tape>
      </TapeSection>

      <Why>
        <WhyTitle>Why Trade With Us</WhyTitle>
        <WhySub>Everything you need for successful trading</WhySub>
        <Features>
          <FeatureIcon $from="#2563eb" $to="#1d4ed8"><ChartGlyph /></FeatureIcon>
          <FeatureIcon $from="#22c55e" $to="#15803d"><FaLayerGroup /></FeatureIcon>
          <FeatureIcon $from="#3b82f6" $to="#1d4ed8"><FaDesktop /></FeatureIcon>
          <FeatureIcon $from="#eab308" $to="#a16207"><WalletGlyph /></FeatureIcon>
        </Features>
      </Why>
      <Band />

      <Toast>
        <div>
          Someone from <b>Western Cape</b> just <b>invested</b> <Money>$50,000</Money>
        </div>
      </Toast>
      <LangBox>
        <UsFlag />
        <LangCode>EN</LangCode>
        <ChevronUp size={16} color="#666" />
      </LangBox>
      <ChatCard>
        <ChatText>
          Hi there<Wave />If you need any assistance,
          <br />
          I'm always here.
        </ChatText>
        <ChatInput>Enter your message...</ChatInput>
      </ChatCard>
      <ChatBubble>
        <svg width="20" height="20" viewBox="0 0 20 20" fill="#fff">
          <path d="M2 2.5A2 2 0 014 .5h12a2 2 0 012 2v11a2 2 0 01-2 2H7l-5 4z" />
        </svg>
        <ChatCount>1</ChatCount>
      </ChatBubble>
    </Page>
  );
}
